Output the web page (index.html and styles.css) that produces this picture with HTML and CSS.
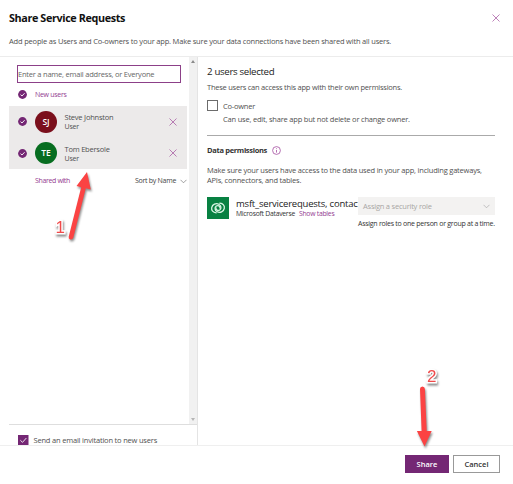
FILE: index.html
```html
<!DOCTYPE html>
<html lang="en">
<head>
<meta charset="utf-8">
<title>Share Service Requests</title>
<link rel="stylesheet" href="styles.css">
</head>
<body>
<div class="dialog">
  <header class="header">
    <div class="title-row">
      <h1>Share Service Requests</h1>
      <svg class="close" viewBox="0 0 8 8"><path d="M.5.5l7 7M7.5.5l-7 7"/></svg>
    </div>
    <p class="intro">Add people as Users and Co-owners to your app. Make sure your data connections have been shared with all users.</p>
  </header>
  <main class="body">
    <section class="left">
      <div class="list-wrap">
        <div class="list">
          <div class="search"><span>Enter a name, email address, or Everyone</span></div>
          <div class="group">
            <svg class="check" viewBox="0 0 9 9"><circle cx="4.5" cy="4.5" r="4.4"/><path d="M2.5 4.6l1.5 1.4 2.6-2.8"/></svg>
            <span class="new-users">New users</span>
          </div>
          <div class="selected">
            <div class="person">
              <svg class="check" viewBox="0 0 9 9"><circle cx="4.5" cy="4.5" r="4.4"/><path d="M2.5 4.6l1.5 1.4 2.6-2.8"/></svg>
              <div class="avatar red">SJ</div>
              <div class="who"><div class="name">Steve Johnston</div><div class="role">User</div></div>
              <svg class="close" viewBox="0 0 8 8"><path d="M.5.5l7 7M7.5.5l-7 7"/></svg>
            </div>
            <div class="person">
              <svg class="check" viewBox="0 0 9 9"><circle cx="4.5" cy="4.5" r="4.4"/><path d="M2.5 4.6l1.5 1.4 2.6-2.8"/></svg>
              <div class="avatar green">TE</div>
              <div class="who"><div class="name">Tom Ebersole</div><div class="role">User</div></div>
              <svg class="close" viewBox="0 0 8 8"><path d="M.5.5l7 7M7.5.5l-7 7"/></svg>
            </div>
          </div>
          <div class="sort-row">
            <span class="shared">Shared with</span>
            <span class="sort">Sort by Name</span>
            <svg class="chevron" viewBox="0 0 7 5"><path d="M.5.8l3 3 3-3"/></svg>
          </div>
        </div>
        <div class="scrollbar"><i class="up"></i><i class="down"></i></div>
      </div>
      <div class="invite">
        <svg class="box" viewBox="0 0 11 11"><rect width="11" height="11"/><path d="M2.5 5.5l2.2 2.2 4-4.5"/></svg>
        <span>Send an email invitation to new users</span>
      </div>
    </section>
    <section class="right">
      <h2>2 users selected</h2>
      <p class="access">These users can access this app with their own permissions.</p>
      <div class="co-row"><i class="empty-box"></i><span>Co-owner</span></div>
      <p class="co-note">Can use, edit, share app but not delete or change owner.</p>
      <div class="data-head">
        <h3>Data permissions</h3>
        <svg class="info" viewBox="0 0 9 9"><circle cx="4.5" cy="4.5" r="3.9"/><path d="M4.5 4v2.6M4.5 2.3v.8"/></svg>
      </div>
      <p class="data-note"><span>Make sure your users have access to the data used in your app, including gateways,</span><br><span>APIs, connectors, and tables.</span></p>
      <div class="source">
        <svg class="dataverse" viewBox="0 0 22 22"><rect width="22" height="22" fill="#088142"/><g fill="none" stroke="#d8f5e3" stroke-width="1.3" stroke-linecap="round"><path d="M9.200 15.800C6 15.600 4.200 13.300 4.700 10.700C5.300 7.500 9 5.700 11.800 7.200C14.300 8.600 14.600 11.700 12.700 13C11 14.100 8.700 13 9 10.900"/><path d="M12.800 6.200C16 6.400 17.800 8.700 17.300 11.300C16.700 14.500 13 16.300 10.200 14.800C7.700 13.400 7.400 10.300 9.300 9C11 7.900 13.300 9 13 11.100"/></g></svg>
        <div class="source-text">
          <div class="tables">msft_servicerequests, contac</div>
          <div class="provider"><span class="ms">Microsoft Dataverse</span><span class="show">Show tables</span></div>
        </div>
        <div class="role-pick">
          <div class="select"><span>Assign a security role</span><svg class="chevron" viewBox="0 0 7 5"><path d="M.5.8l3 3 3-3"/></svg></div>
          <div class="hint"><span>Assign roles to one person or group at a time.</span></div>
        </div>
      </div>
    </section>
  </main>
  <footer class="footer">
    <button class="share"><span>Share</span></button>
    <button class="cancel"><span>Cancel</span></button>
  </footer>
  <svg class="marks" viewBox="0 0 513 484">
    <g fill="#fb4343">
      <path d="M87 172l-10.500 14 4.700 1.200-12.500 49.500q-.4 2.300 1.600 2.800t3-1.700l12.500-49.500 5 1.200z"/>
      <path d="M424.500 446.500l-7.600-15.500h4.700l-1.600-42q0-2.500 2.400-2.500t2.500 2.500l1.800 42h5z"/>
    </g>
    <text x="55.500" y="233">1</text>
    <text x="427" y="382">2</text>
  </svg>
</div>
</body>
</html>
```

FILE: styles.css
```css
* { box-sizing: border-box; }
body { margin: 0; background: #fff; color: #505050; font: 7.5px/10px "Open Sans", "Noto Sans", sans-serif; letter-spacing: -.22px; }
h1, h2, h3, p { margin: 0; }
svg { display: block; flex: none; }
span, h1, h2, h3, .name, .tables { white-space: nowrap; }
.dialog { position: relative; width: 513px; height: 484px; display: flex; flex-direction: column; overflow: hidden; }
.header { height: 57px; border-bottom: 1px solid #ececec; padding: 10px 14px 0 9px; }
.title-row { display: flex; justify-content: space-between; align-items: center; height: 16px; }
h1 { font-size: 10.8px; line-height: 16px; font-weight: 700; color: #111; letter-spacing: -.38px; }
.close { width: 8px; height: 8px; margin-right: -.5px; }
.close path { fill: none; stroke: #a04c9b; stroke-width: .7; }
.intro { margin-top: 10px; white-space: nowrap; letter-spacing: -.185px; }
.body { height: 388px; display: flex; }
.left { width: 198px; border-right: 1px solid #e4e4e4; display: flex; flex-direction: column; overflow: hidden; }
.list-wrap { height: 367px; display: flex; flex: none; }
.list { width: 189px; padding: 8px 2px 0 9px; }
.search { width: 164px; height: 18px; margin-left: 8px; border: 1px solid #8c4088; line-height: 16px; color: #666; }
.group { height: 23px; display: flex; align-items: center; padding-left: 9px; }
.check { width: 9px; height: 9px; }
.check circle { fill: #742774; }
.check path { fill: none; stroke: #fff; stroke-width: .9; }
.new-users { margin-left: 8px; color: #943d91; font-size: 7px; letter-spacing: -.3px; }
.selected { height: 63px; background: #eceaea; }
.person { height: 31.5px; padding-left: 9px; display: flex; align-items: center; }
.avatar { width: 22px; height: 22px; margin-left: 8px; border-radius: 50%; color: #fff; font-weight: 600; font-size: 8.5px; line-height: 22px; text-align: center; letter-spacing: 0; }
.red { background: #7b0f1c; }
.green { background: #076d20; }
.who { width: 104px; margin-left: 7.5px; }
.role { font-size: 7px; line-height: 9px; }
.sort-row { height: 24px; display: flex; align-items: center; padding-left: 26px; font-size: 7px; letter-spacing: -.28px; }
.shared { width: 100px; color: #943d91; letter-spacing: -.36px; }
.sort { width: 45px; color: #444; }
.chevron { width: 7px; height: 5px; }
.chevron path { fill: none; stroke: #777; stroke-width: .7; }
.scrollbar { width: 9px; background: #f1f1f1; display: flex; flex-direction: column; justify-content: space-between; align-items: center; padding: 3px 0; }
.up, .down { border: 2px solid transparent; }
.up { border-top: 0; border-bottom: 3px solid #8b8b8b; }
.down { border-bottom: 0; border-top: 3px solid #b5b5b5; }
.invite { height: 21px; flex: none; margin-left: 9px; border-top: 1px solid #dedede; padding: 10px 0 0 9px; display: flex; align-items: center; letter-spacing: -.19px; }
.box { width: 10.5px; height: 10.5px; }
.box rect { fill: #742774; }
.box path { fill: none; stroke: #fff; stroke-width: .9; }
.invite span { margin-left: 5px; }
.right { width: 297px; padding: 7px 0 0 9px; }
h2 { font-size: 9.7px; line-height: 16px; font-weight: 400; color: #222; letter-spacing: -.33px; }
.access { line-height: 14px; white-space: nowrap; letter-spacing: -.24px; }
.co-row { height: 13px; margin-top: 5px; display: flex; align-items: center; }
.empty-box { width: 11px; height: 11px; border: 1px solid #6c6c6c; margin-right: 5px; }
.co-note { padding-left: 16px; height: 24px; width: 288px; border-bottom: 1px solid #aaa; line-height: 14px; white-space: nowrap; letter-spacing: -.2px; }
.data-head { margin-top: 7px; height: 14px; display: flex; align-items: center; }
h3 { width: 65px; font-size: 7.5px; font-weight: 700; color: #333; letter-spacing: -.32px; }
.info { width: 9px; height: 9px; }
.info circle, .info path { fill: none; stroke: #a34da0; stroke-width: .8; }
.data-note { margin-top: 8px; width: 288px; letter-spacing: -.2px; }
.source { margin-top: 12px; display: flex; }
.dataverse { width: 22px; height: 22px; }
.source-text { width: 122px; margin-left: 7px; flex: none; padding-top: 1px; overflow: hidden; }
.tables { font-size: 9.5px; line-height: 12px; color: #222; font-weight: 500; letter-spacing: -.22px; }
.provider { display: flex; gap: 4px; font-size: 6.8px; line-height: 8px; color: #333; letter-spacing: -.25px; }
.show { color: #943d91; }
.role-pick { width: 137px; }
.select { height: 18px; background: #f3f2f1; color: #a8a6a4; display: flex; align-items: center; justify-content: space-between; padding: 0 5px; }
.select .chevron path { stroke: #aaa; }
.hint { line-height: 10px; margin-top: 4px; color: #333; font-size: 7px; white-space: nowrap; letter-spacing: -.26px; }
.footer { height: 39px; border-top: 1px solid #efefef; padding: 9px 13px 0 0; display: flex; justify-content: flex-end; gap: 4px; }
button { height: 18px; padding: 0; font: 600 7.5px/16px "Open Sans", sans-serif; border-radius: 0; }
.share { width: 44px; color: #fff; background: #742774; border: 1px solid #742774; }
.cancel { width: 47px; color: #333; background: #fff; border: 1px solid #999; }
.marks { position: absolute; inset: 0; width: 513px; height: 484px; pointer-events: none; filter: drop-shadow(1px 2px 1px rgba(0,0,0,.45)); }
.marks text { font: 17px "Liberation Sans", sans-serif; letter-spacing: 0; fill: #f04a4a; stroke: #fff; stroke-width: 3px; paint-order: stroke; }
```
